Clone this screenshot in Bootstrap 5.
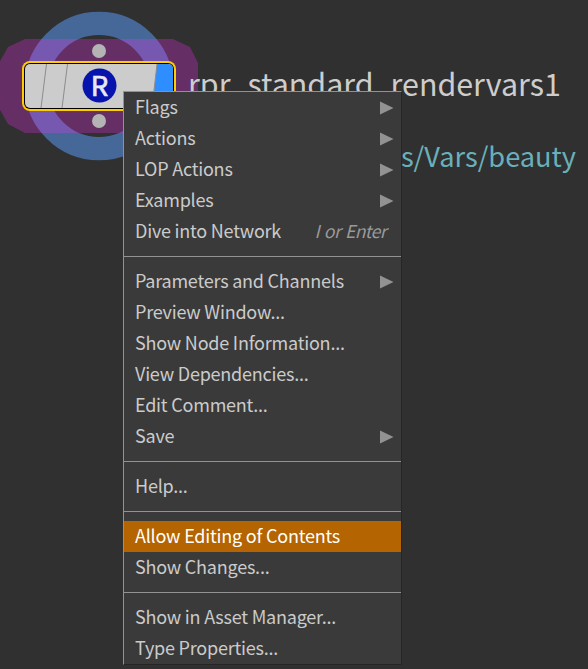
<!DOCTYPE html>
<html lang="en" data-bs-theme="dark">
<head>
<meta charset="utf-8">
<meta name="viewport" content="width=device-width, initial-scale=1">
<title>Network editor</title>
<link href="https://cdn.jsdelivr.net/npm/bootstrap@5.3.0/dist/css/bootstrap.min.css" rel="stylesheet">
<style>
  body { background: #303030; color: #c8c8c8; font-family: "Noto Sans CJK SC", "Noto Sans", sans-serif; }
  .network { width: 588px; height: 669px; }
  .node-art { left: 0; top: 0; }
  .node-title { left: 188px; top: 59px; font-size: 30.4px; line-height: 48px; color: #cdcdcd; }
  .node-path { right: 12px; top: 131px; font-size: 27.2px; line-height: 48px; color: #6ab0ba; }
  .node-menu {
    left: 123px; top: 91px; width: 279px; min-width: 0; z-index: 2;
    --bs-dropdown-bg: #3a3a3a; --bs-dropdown-padding-y: 0; --bs-dropdown-padding-x: 0;
    border: 1px solid #929292; border-right-color: #262626; border-bottom-color: #262626;
    --bs-dropdown-link-color: #cbcbcb; --bs-dropdown-link-active-bg: #b46400;
    --bs-dropdown-link-hover-bg: #b46400; --bs-dropdown-link-active-color: #fff;
    --bs-dropdown-font-size: 18px;
  }
  .node-menu .dropdown-item { height: 31px; padding: 0 7px 0 11px; line-height: 29px; letter-spacing: -.22px; }
  .node-menu .dropdown-item.d-flex { padding-bottom: 2px; }
  .node-menu .dropdown-item svg { position: relative; top: 1px; }
  .node-menu .dropdown-divider { margin: 9px 0; border-top: 1px solid #929292; opacity: 1; }
  .shortcut { color: #999; margin-right: 8px; font-size: 17.6px; letter-spacing: -.6px; word-spacing: 1.5px; }
</style>
</head>
<body>
<main class="network position-relative overflow-hidden">
  <svg class="node-art position-absolute" width="200" height="170" viewBox="0 0 200 170" aria-hidden="true">
    <defs><clipPath id="halo"><path d="M25 39H173L190 47L198 63V108L190 124L173 133H25L8 124L-1 108V63L8 47Z"/></clipPath></defs>
    <circle cx="99" cy="86" r="62.6" fill="none" stroke="#456899" stroke-width="23.2"/>
    <g clip-path="url(#halo)">
      <rect x="-1" y="38" width="200" height="96" fill="#652f65"/>
      <circle cx="99" cy="86" r="62.6" fill="none" stroke="#7758b0" stroke-width="23.2"/>
    </g>
    <circle cx="99" cy="51" r="7" fill="#b4b4b4"/><circle cx="99" cy="121" r="7" fill="#b4b4b4"/>
    <rect x="22" y="61" width="154" height="50" rx="8" fill="#ffcc00"/>
    <rect x="24" y="63" width="150" height="46" rx="6" fill="#000"/>
    <rect x="25" y="64" width="148" height="44" rx="5" fill="#cccccc"/>
    <path d="M157 64H168Q173 64 173 69V103Q173 108 168 108H152Z" fill="#2e8eff"/>
    <path d="M46.5 64L41 108M67.5 64L62 108M157 64L152 108" stroke="#8c8c8c" fill="none"/>
    <circle cx="99.5" cy="85.5" r="17" fill="#0614ad"/>
    <text x="99.6" y="96" text-anchor="middle" font-size="27.5" stroke="#e8e8f4" stroke-width=".7" fill="#e8e8f4">R</text>
  </svg>
  <div class="node-title position-absolute text-nowrap">rpr_standard_rendervars1</div>
  <div class="node-path position-absolute text-nowrap">s/Vars/beauty</div>
  <div class="node-menu dropdown-menu show rounded-0">
    <a class="dropdown-item d-flex align-items-center justify-content-between">Flags<svg width="14" height="14"><path d="M0 .5L13.5 7L0 13.5Z" fill="#929292"/></svg></a>
    <a class="dropdown-item d-flex align-items-center justify-content-between">Actions<svg width="14" height="14"><path d="M0 .5L13.5 7L0 13.5Z" fill="#929292"/></svg></a>
    <a class="dropdown-item d-flex align-items-center justify-content-between">LOP Actions<svg width="14" height="14"><path d="M0 .5L13.5 7L0 13.5Z" fill="#929292"/></svg></a>
    <a class="dropdown-item d-flex align-items-center justify-content-between">Examples<svg width="14" height="14"><path d="M0 .5L13.5 7L0 13.5Z" fill="#929292"/></svg></a>
    <a class="dropdown-item d-flex align-items-center justify-content-between">Dive into Network<span class="shortcut fst-italic">I or Enter</span></a>
    <hr class="dropdown-divider">
    <a class="dropdown-item d-flex align-items-center justify-content-between">Parameters and Channels<svg width="14" height="14"><path d="M0 .5L13.5 7L0 13.5Z" fill="#929292"/></svg></a>
    <a class="dropdown-item">Preview Window...</a>
    <a class="dropdown-item">Show Node Information...</a>
    <a class="dropdown-item">View Dependencies...</a>
    <a class="dropdown-item">Edit Comment...</a>
    <a class="dropdown-item d-flex align-items-center justify-content-between">Save<svg width="14" height="14"><path d="M0 .5L13.5 7L0 13.5Z" fill="#929292"/></svg></a>
    <hr class="dropdown-divider">
    <a class="dropdown-item">Help...</a>
    <hr class="dropdown-divider">
    <a class="dropdown-item active">Allow Editing of Contents</a>
    <a class="dropdown-item">Show Changes...</a>
    <hr class="dropdown-divider">
    <a class="dropdown-item">Show in Asset Manager...</a>
    <a class="dropdown-item">Type Properties...</a>
  </div>
</main>
<script src="https://cdn.jsdelivr.net/npm/bootstrap@5.3.0/dist/js/bootstrap.bundle.min.js"></script>
</body>
</html>
